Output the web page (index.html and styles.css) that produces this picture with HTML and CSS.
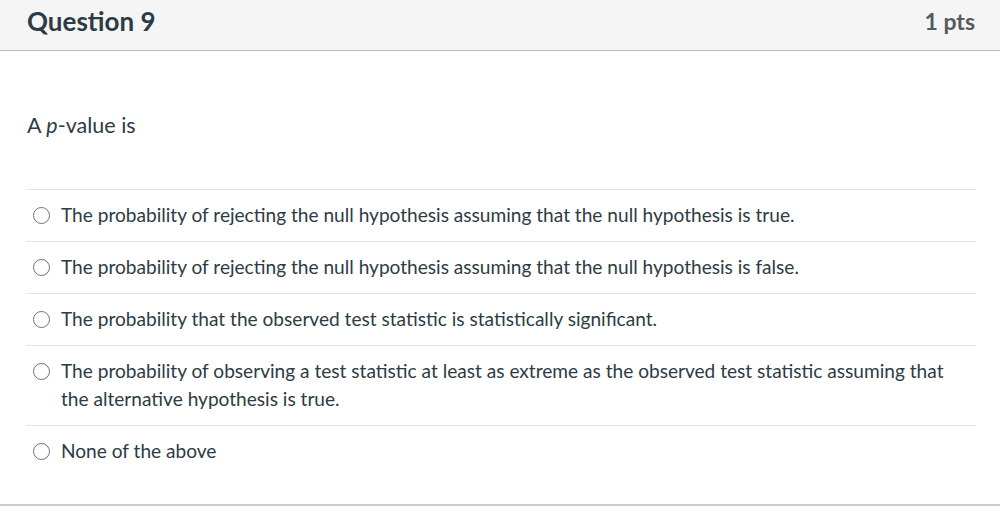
FILE: index.html
```html
<!DOCTYPE html>
<html lang="en">
<head>
<meta charset="utf-8">
<title>Question 9</title>
<link rel="stylesheet" href="styles.css">
</head>
<body>
<div class="quiz">
  <header class="q-header">
    <h2 class="q-title">Question 9</h2>
    <span class="q-points">1 pts</span>
  </header>
  <div class="q-body">
    <p class="q-text">A <em>p</em>-value is</p>
    <div class="answers">
      <label class="answer"><span class="radio"></span><span class="answer-text">The probability of rejecting the null hypothesis assuming that the null hypothesis is true.</span></label>
      <label class="answer"><span class="radio"></span><span class="answer-text">The probability of rejecting the null hypothesis assuming that the null hypothesis is false.</span></label>
      <label class="answer"><span class="radio"></span><span class="answer-text">The probability that the observed test statistic is statistically significant.</span></label>
      <label class="answer"><span class="radio"></span><span class="answer-text">The probability of observing a test statistic at least as extreme as the observed test statistic assuming that the alternative hypothesis is true.</span></label>
      <label class="answer"><span class="radio"></span><span class="answer-text">None of the above</span></label>
    </div>
  </div>
</div>
</body>
</html>
```
FILE: styles.css
```css
html, body {
  margin: 0;
  padding: 0;
  background: #ffffff;
}
body {
  font-family: Lato, "Noto Sans", "Liberation Sans", sans-serif;
  color: #2d3b45;
}
.quiz {
  border-bottom: 2px solid #c7cdd1;
}
.q-header {
  display: flex;
  justify-content: space-between;
  align-items: flex-start;
  box-sizing: border-box;
  height: 51px;
  padding: 6px 25px 0 27px;
  background: #f5f5f5;
  border-bottom: 1px solid #b5b9bc;
}
.q-title {
  margin: 0;
  font-size: 26px;
  line-height: 30px;
  font-weight: 700;
  color: #2d3b45;
}
.q-points {
  font-size: 23px;
  line-height: 30px;
  font-weight: 700;
  color: #555a5e;
}
.q-body {
  padding: 0 24px 27px 26px;
}
.q-text {
  margin: 60px 0 50px 1px;
  font-size: 21.5px;
  line-height: 28px;
}
.q-text em {
  font-style: italic;
}
.answers {
  display: flex;
  flex-direction: column;
}
.answer {
  display: flex;
  align-items: flex-start;
  padding: 11px 22px 12px 7px;
  border-top: 1px solid #e3e5e6;
  font-size: 19.1px;
  line-height: 28px;
}
.radio {
  flex: none;
  width: 15px;
  height: 15px;
  margin-top: 6px;
  margin-right: 11px;
  border: 1.3px solid #6b6f72;
  border-radius: 50%;
  background: #fff;
}
.answer-text {
  flex: 1;
}
```
